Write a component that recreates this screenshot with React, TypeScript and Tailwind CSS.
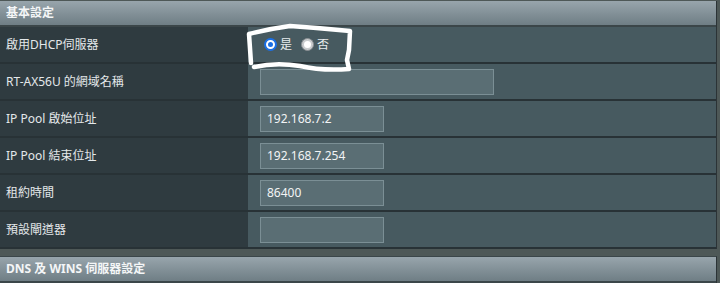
import React from 'react';

const font = { fontFamily: '"Noto Sans", "Noto Sans CJK TC", sans-serif' };

interface RowProps {
  label: string;
  children?: React.ReactNode;
}

const Row = ({ label, children }: RowProps) => (
  <div className="flex h-[37px] border-b-2 border-[#283236]">
    <div className="w-[248px] shrink-0 bg-[#2f3b40] flex items-center pl-[6px] text-[12px] text-[#e4e8ea]">
      {label}
    </div>
    <div className="flex-1 bg-[#475a60] flex items-center pl-3">{children}</div>
  </div>
);

const Field = ({ value = '', wide = false }: { value?: string; wide?: boolean }) => (
  <div
    className={`${wide ? 'w-[234px]' : 'w-[124px]'} h-[26px] bg-[#5a6e74] border border-[#7b8f95] flex items-center pl-[6px] text-[12px] text-[#f2f4f5]`}
  >
    {value}
  </div>
);

const Header = ({ title }: { title: string }) => (
  <div className="h-[26px] bg-gradient-to-b from-[#98a5ac] to-[#6f7e85] border-b-2 border-[#3b4649] flex items-center pl-[6px] text-[12px] font-bold text-[#f4f6f7]">
    {title}
  </div>
);

const App = () => {
  return (
    <div className="w-[720px] h-[283px] bg-[#4e5857] overflow-hidden relative pt-px" style={font}>
      <div className="w-[717px] border-r border-[#2b3336]">
        <Header title="基本設定" />
        <Row label="啟用DHCP伺服器">
          <div className="flex items-center gap-[3px] ml-1 text-[12px] text-[#e8ecee]">
            <span className="w-[13px] h-[13px] rounded-full bg-[#1b6fe4] flex items-center justify-center">
              <span className="w-[9px] h-[9px] rounded-full border-2 border-white bg-[#1b6fe4]" />
            </span>
            <span>是</span>
            <span className="ml-[6px] w-[13px] h-[13px] rounded-full bg-[#c9ccce] border border-[#8a8f93] flex items-center justify-center">
              <span className="w-[7px] h-[7px] rounded-full bg-white" />
            </span>
            <span>否</span>
          </div>
        </Row>
        <Row label="RT-AX56U 的網域名稱">
          <Field wide />
        </Row>
        <Row label="IP Pool 啟始位址">
          <Field value="192.168.7.2" />
        </Row>
        <Row label="IP Pool 結束位址">
          <Field value="192.168.7.254" />
        </Row>
        <Row label="租約時間">
          <Field value="86400" />
        </Row>
        <Row label="預設閘道器">
          <Field />
        </Row>
      </div>
      <div className="h-[7px]" />
      <div className="w-[717px] border-r border-[#2b3336] border-t border-t-[#3b4649]">
        <Header title="DNS 及 WINS 伺服器設定" />
      </div>
      <svg className="absolute left-0 top-0 pointer-events-none" width="720" height="283">
        <path
          d="M251 63 L249 34 Q268 29 290 26 Q320 28 350 31 L349 50 L347 60 L349 69 Q322 71 300 66 Q276 62 254 67"
          fill="none"
          stroke="#ffffff"
          strokeWidth="4.5"
          strokeLinecap="round"
          strokeLinejoin="round"
        />
      </svg>
    </div>
  );
};

export default App;
